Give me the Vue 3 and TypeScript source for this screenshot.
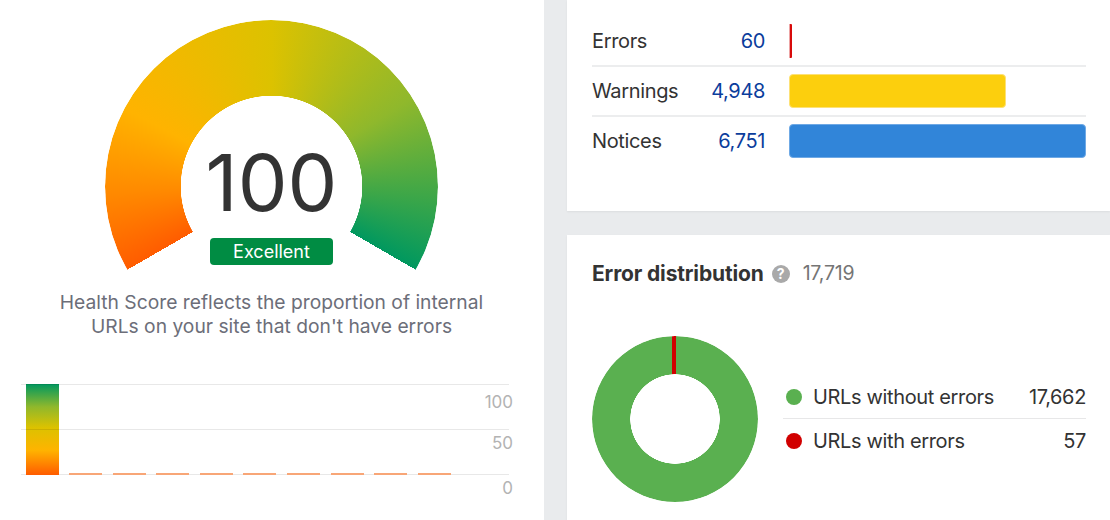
<script setup lang="ts">
const issues = [
  { label: 'Errors', value: '60', kind: 'err', width: '3px' },
  { label: 'Warnings', value: '4,948', kind: 'warn', width: '217px' },
  { label: 'Notices', value: '6,751', kind: 'note', width: '297px' }
]
const ticks = [0, 1, 2, 3, 4, 5, 6, 7, 8]
const legend = [
  { label: 'URLs without errors', value: '17,662', color: '#5ab050' },
  { label: 'URLs with errors', value: '57', color: '#d10000' }
]
</script>

<template>
  <main class="page">
    <section class="left">
      <div class="gauge">
        <div class="ring"></div>
        <div class="score">100</div>
        <div class="badge">Excellent</div>
      </div>
      <p class="blurb">Health Score reflects the proportion of internal<br />URLs on your site that don't have errors</p>
      <div class="chart">
        <div class="grid-row"></div>
        <div class="grid-row"></div>
        <div class="grid-end"></div>
        <div class="bars">
          <div class="main-bar"></div>
          <div v-for="t in ticks" :key="t" class="tick"></div>
        </div>
        <span class="axis a100">100</span>
        <span class="axis a50">50</span>
        <span class="axis a0">0</span>
      </div>
    </section>

    <div class="right">
      <section class="card issues">
        <div v-for="row in issues" :key="row.label" class="issue">
          <span class="issue-label">{{ row.label }}</span>
          <span class="issue-value">{{ row.value }}</span>
          <div class="track">
            <div class="fill" :class="row.kind" :style="{ width: row.width }"></div>
          </div>
        </div>
      </section>

      <section class="card dist">
        <h2 class="dist-title">
          <span>Error distribution</span>
          <span class="help">?</span>
          <span class="dist-total">17,719</span>
        </h2>
        <div class="dist-body">
          <div class="donut"></div>
          <div class="legend">
            <div v-for="item in legend" :key="item.label" class="legend-row">
              <span class="dot" :style="{ background: item.color }"></span>
              <span class="legend-label">{{ item.label }}</span>
              <span class="legend-value">{{ item.value }}</span>
            </div>
          </div>
        </div>
      </section>
    </div>
  </main>
</template>

<style>
html, body { margin: 0; background: #fff; overflow: hidden; }
</style>

<style scoped>
.page {
  display: flex;
  width: 1110px;
  height: 520px;
  overflow: hidden;
  font-family: Inter, "Liberation Sans", sans-serif;
  color: #333;
  background: #e9ebed;
}
.left {
  width: 544px;
  flex: none;
  height: 100%;
  background: #fff;
  padding-top: 20px;
  box-sizing: border-box;
}
.gauge {
  position: relative;
  width: 333px;
  height: 250px;
  margin-left: 105px;
}
.ring {
  position: absolute;
  inset: 0 0 auto 0;
  height: 333px;
  border-radius: 50%;
  background: conic-gradient(from 240deg, #ff5c00 0deg, #ff8a00 28deg, #ffb300 58deg, #dcc200 120deg, #8fb82c 178deg, #3aa649 215deg, #00985f 240deg, transparent 240deg);
  -webkit-mask: radial-gradient(circle closest-side, transparent 90.5px, #000 91px);
  mask: radial-gradient(circle closest-side, transparent 90.5px, #000 91px);
}
.score {
  position: absolute;
  left: 0;
  right: 0;
  top: 114px;
  text-align: center;
  font-size: 79px;
  line-height: 97px;
  font-weight: 400;
  color: #333;
}
.badge {
  position: absolute;
  left: 105px;
  top: 218px;
  width: 123px;
  height: 27px;
  border-radius: 4px;
  background: #008c43;
  color: #fff;
  font-size: 18px;
  line-height: 27px;
  text-align: center;
}
.blurb {
  margin: 20px 0 0;
  width: 543px;
  text-align: center;
  font-size: 19.25px;
  line-height: 24px;
  color: #6c6e79;
}
.chart {
  position: relative;
  width: 488px;
  margin: 46px 0 0 21px;
  height: 91px;
}
.grid-row {
  position: relative;
  z-index: 1;
  height: 44px;
  border-top: 1px solid rgba(0, 0, 0, 0.09);
}
.grid-end {
  position: relative;
  height: 0;
  border-top: 1px solid rgba(0, 0, 0, 0.09);
}
.bars {
  position: absolute;
  left: 5px;
  top: 0;
  height: 91px;
  display: flex;
  align-items: flex-end;
  gap: 10.6px;
}
.main-bar {
  width: 33px;
  height: 91px;
  flex: none;
  margin-right: -0.6px;
  background: linear-gradient(to top, #ff5c00 0%, #ffb300 27%, #dcc200 52%, #8fb82c 75%, #00985f 100%);
}
.tick {
  width: 33px;
  height: 2px;
  flex: none;
  background: #f8a677;
}
.axis {
  position: absolute;
  right: -4px;
  font-size: 17px;
  line-height: 20px;
  color: #b3b3b3;
}
.a100 { top: 8px; }
.a50 { top: 49px; }
.a0 { top: 94px; }
.right {
  flex: 1;
  margin-left: 23px;
  display: flex;
  flex-direction: column;
  gap: 24px;
}
.card {
  background: #fff;
  box-shadow: 0 1px 2px rgba(0, 0, 0, 0.06);
  padding: 0 24px 0 25px;
}
.issues {
  height: 211px;
  box-sizing: border-box;
  padding-top: 17px;
}
.issue {
  display: flex;
  align-items: center;
  height: 50px;
  box-sizing: border-box;
  font-size: 20px;
  letter-spacing: -0.35px;
  border-bottom: 2px solid #ecedee;
}
.issue:last-child { border-bottom-color: transparent; }
.issue-label { width: 100px; flex: none; }
.issue-value {
  width: 73px;
  flex: none;
  text-align: right;
  color: #0b3d9c;
}
.track {
  margin-left: 24px;
  flex: 1;
  height: 34px;
}
.fill {
  height: 100%;
  box-sizing: border-box;
  border-radius: 4px;
}
.err { background: #d80a0a; border-radius: 1px; border-left: 1px solid #eda3a3; }
.warn { background: #fccf0d; border: 1px solid #fde176; }
.note { background: #3185d9; border: 1px solid #6fa9e5; }
.dist {
  flex: 1;
  padding-top: 27px;
}
.dist-title {
  display: flex;
  align-items: center;
  margin: 0;
  font-size: 21px;
  letter-spacing: -0.15px;
  line-height: 24px;
  font-weight: 700;
  color: #333;
}
.help {
  width: 18px;
  height: 18px;
  margin-left: 8px;
  border-radius: 50%;
  background: #a9a9a9;
  color: #fff;
  font-size: 14px;
  line-height: 18px;
  text-align: center;
  font-weight: 700;
}
.dist-total {
  margin-left: 13px;
  margin-bottom: 2px;
  font-weight: 400;
  font-size: 19.5px;
  line-height: 22px;
  letter-spacing: -0.2px;
  color: #757575;
}
.dist-body {
  display: flex;
  align-items: center;
  margin-top: 50px;
}
.donut {
  width: 166px;
  height: 166px;
  flex: none;
  border-radius: 50%;
  background: linear-gradient(90deg, transparent 80px, #d10000 80px, #d10000 84px, transparent 84px) 0 0 / 100% 50% no-repeat, #5ab050;
  -webkit-mask: radial-gradient(circle closest-side, transparent 44.5px, #000 45px);
  mask: radial-gradient(circle closest-side, transparent 44.5px, #000 45px);
}
.legend {
  flex: 1;
  margin-left: 25px;
  margin-top: -1px;
}
.legend-row {
  display: flex;
  align-items: center;
  height: 44px;
  box-sizing: border-box;
  font-size: 20px;
  letter-spacing: -0.35px;
}
.legend-row:first-child { border-bottom: 1px solid #e7e7e8; padding-top: 2px; }
.dot {
  width: 16px;
  height: 16px;
  margin-left: 3px;
  border-radius: 50%;
  flex: none;
}
.legend-label { margin-left: 11px; flex: 1; }
</style>
